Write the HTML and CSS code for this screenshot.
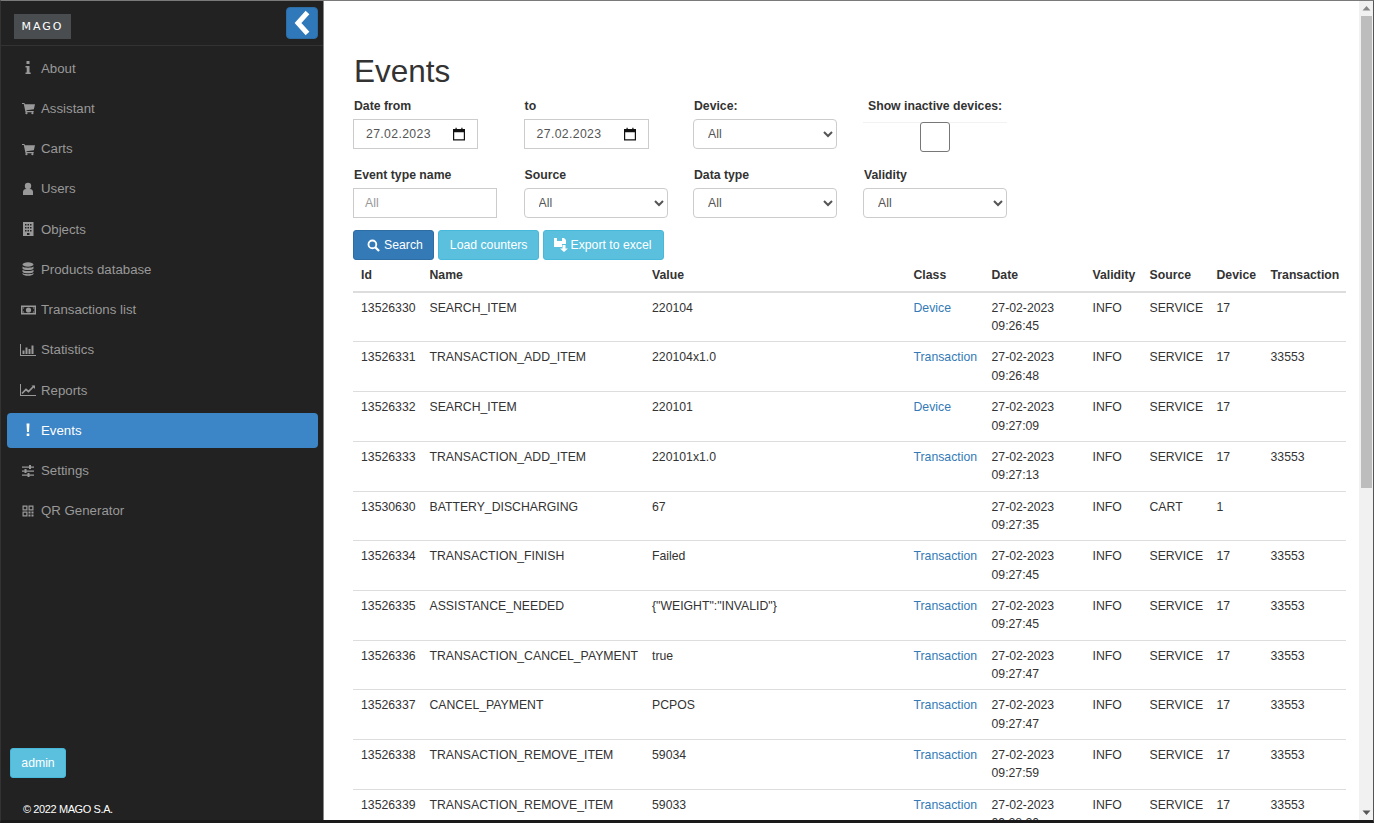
FILE: index.html
```html
<!DOCTYPE html>
<html lang="en">
<head>
    <meta charset="UTF-8">
    <meta name="viewport" content="width=device-width, initial-scale=1.0">
    <title>Events</title>
    <link rel="stylesheet" href="styles.css">
</head>
<body>
    <div class="app">
        <aside class="sidebar">
            <div class="brand">
                <div class="logo">MAGO</div>
                <button class="toggle-btn">
                    <svg width="18" height="26" viewBox="0 0 18 26"><path d="M14.500 2.500 L5 13 L14.500 23.500" fill="none" stroke="#fff" stroke-width="5"/></svg>
                </button>
            </div>
            <nav class="menu">
                <a class="menu-item"><span class="menu-icon"><svg width="14" height="14" viewBox="0 0 14 14"><path d="M5.500 0h3v3h-3zM4.500 5h4v6.500h1.200V13H4.500v-1.500h1.200V6.500H4.500z" fill="currentColor"/></svg></span>About</a>
                <a class="menu-item"><span class="menu-icon"><svg width="13" height="14" viewBox="0 0 14 14"><path d="M0 1.500h2.600l.5 1.500H14l-1.200 5.400-8 .9.2 1h7.600v1.200H3.800L1.900 2.700H0z" fill="currentColor"/><circle cx="4.800" cy="12.600" r="1.200" fill="currentColor"/><circle cx="11.200" cy="12.600" r="1.200" fill="currentColor"/></svg></span>Assistant</a>
                <a class="menu-item"><span class="menu-icon"><svg width="13" height="14" viewBox="0 0 14 14"><path d="M0 1.500h2.600l.5 1.500H14l-1.200 5.400-8 .9.2 1h7.600v1.200H3.800L1.900 2.700H0z" fill="currentColor"/><circle cx="4.800" cy="12.600" r="1.200" fill="currentColor"/><circle cx="11.200" cy="12.600" r="1.200" fill="currentColor"/></svg></span>Carts</a>
                <a class="menu-item"><span class="menu-icon"><svg width="14" height="14" viewBox="0 0 14 14"><circle cx="7" cy="4" r="3.200" fill="currentColor"/><path d="M2 13v-3c0-2 1.500-3 3-3h4c1.500 0 3 1 3 3v3z" fill="currentColor"/></svg></span>Users</a>
                <a class="menu-item"><span class="menu-icon"><svg width="14" height="14" viewBox="0 0 14 14"><path fill-rule="evenodd" d="M2 0h10.500v14H2zM4 2v1.500h1.500V2zM6.500 2v1.500H8V2zM9 2v1.500h1.500V2zM4 5v1.500h1.500V5zM6.500 5v1.500H8V5zM9 5v1.500h1.500V5zM4 8v1.500h1.500V8zM6.500 8v1.500H8V8zM9 8v1.500h1.500V8zM6 11v2h2.500v-2z" fill="currentColor"/></svg></span>Objects</a>
                <a class="menu-item"><span class="menu-icon"><svg width="14" height="14" viewBox="0 0 14 14"><ellipse cx="7" cy="2.500" rx="5.500" ry="2.200" fill="currentColor"/><path d="M1.500 4.500c1 1.600 10 1.600 11 0v2c-1 2-10 2-11 0zM1.500 7.800c1 1.600 10 1.600 11 0v2c-1 2-10 2-11 0zM1.500 11c1 1.600 10 1.600 11 0v1c-1 2.400-10 2.400-11 0z" fill="currentColor"/></svg></span>Products database</a>
                <a class="menu-item"><span class="menu-icon"><svg width="15" height="14" viewBox="0 0 15 14"><path fill-rule="evenodd" d="M0 2.500h15v9H0zM1.500 4v6h12V4z" fill="currentColor"/><circle cx="7.500" cy="7" r="2.600" fill="currentColor"/><path d="M2 4.500h1.500L2 6zM13 4.500h-1.500L13 6zM2 9.500h1.500L2 8zM13 9.500h-1.500L13 8z" fill="currentColor"/></svg></span>Transactions list</a>
                <a class="menu-item"><span class="menu-icon"><svg width="16" height="14" viewBox="0 0 16 14"><path d="M0 1h1v11h15v1H0zM2.500 7.500h2V11h-2zM5.500 4.500h2V11h-2zM8.500 6h2v5h-2zM11.500 2.500h2V11h-2z" fill="currentColor"/></svg></span>Statistics</a>
                <a class="menu-item"><span class="menu-icon"><svg width="16" height="14" viewBox="0 0 16 14"><path d="M0 1h1v11h15v1H0z" fill="currentColor"/><path d="M2 10.500 L6 6.500 L8.500 8.500 L14 3" fill="none" stroke="currentColor" stroke-width="1.700"/><path d="M11.500 2.500H15V6z" fill="currentColor"/></svg></span>Reports</a>
                <a class="menu-item active"><span class="menu-icon"><svg width="14" height="14" viewBox="0 0 14 14"><path d="M5.500 0.500h3L8 9H6zM5.700 10.500h2.600V13H5.700z" fill="currentColor"/></svg></span>Events</a>
                <a class="menu-item"><span class="menu-icon"><svg width="14" height="14" viewBox="0 0 14 14"><path d="M1 2.500h12v1.200H1zM1 6.500h12v1.200H1zM1 10.500h12v1.200H1z" fill="currentColor"/><path d="M8 1h2v4H8zM3.500 5h2v4h-2zM6.500 9h2v4h-2z" fill="currentColor"/></svg></span>Settings</a>
                <a class="menu-item"><span class="menu-icon"><svg width="14" height="14" viewBox="0 0 14 14"><path fill-rule="evenodd" d="M1.500 1.500h5v5h-5zM2.700 2.700v2.600h2.600V2.700zM7.500 1.500h5v5h-5zM8.700 2.700v2.600h2.600V2.700zM1.500 7.500h5v5h-5zM2.700 8.700v2.600h2.600V8.700zM7.500 7.500h2v2h-2zM10.500 7.500h2v2h-2zM7.500 10.500h2v2h-2zM10.500 10.500h2v2h-2z" fill="currentColor"/></svg></span>QR Generator</a>
            </nav>
            <div class="sidebar-bottom">
                <button class="btn btn-info btn-admin">admin</button>
                <div class="copyright">© 2022 MAGO S.A.</div>
            </div>
        </aside>

        <main class="content">
            <h1>Events</h1>
            <div class="filters">
                <div class="filter">
                    <label>Date from</label>
                    <div class="field date-field"><span>27.02.2023</span><svg width="14" height="14" viewBox="0 0 14 14"><path fill-rule="evenodd" d="M1 2h2.500V.8h1.200V2h4.600V.8h1.200V2H13v11.500H1zM2.200 5.200v7h9.600v-7z" fill="#111"/></svg></div>
                </div>
                <div class="filter">
                    <label>to</label>
                    <div class="field date-field"><span>27.02.2023</span><svg width="14" height="14" viewBox="0 0 14 14"><path fill-rule="evenodd" d="M1 2h2.500V.8h1.200V2h4.600V.8h1.200V2H13v11.500H1zM2.200 5.200v7h9.600v-7z" fill="#111"/></svg></div>
                </div>
                <div class="filter">
                    <label>Device:</label>
                    <select class="field select-field"><option>All</option></select>
                </div>
                <div class="filter">
                    <label class="label-center">Show inactive devices:</label>
                    <div class="check-wrap"><span class="check-box"></span></div>
                </div>
                <div class="filter">
                    <label>Event type name</label>
                    <input class="field text-field" type="text" placeholder="All">
                </div>
                <div class="filter">
                    <label>Source</label>
                    <select class="field select-field"><option>All</option></select>
                </div>
                <div class="filter">
                    <label>Data type</label>
                    <select class="field select-field"><option>All</option></select>
                </div>
                <div class="filter">
                    <label>Validity</label>
                    <select class="field select-field"><option>All</option></select>
                </div>
            </div>
            <div class="actions">
                <button class="btn btn-primary"><svg width="13" height="13" viewBox="0 0 14 14"><circle cx="5.800" cy="5.800" r="4.200" fill="none" stroke="#fff" stroke-width="2"/><path d="M9 9l4 4" stroke="#fff" stroke-width="2.400"/></svg>Search</button>
                <button class="btn btn-info">Load counters</button>
                <button class="btn btn-info btn-export"><svg width="14" height="14" viewBox="0 0 14 14"><path fill-rule="evenodd" d="M0 0h10l2 2v4H8v3H0zM3 0v3h5V0zM8.500 7h3v3.500H14L10 14l-4-3.500h2.500z" fill="#fff"/></svg>Export to excel</button>
            </div>
            <table class="events-table">
                <colgroup>
                    <col class="col-id"><col class="col-name"><col class="col-value"><col class="col-class"><col class="col-date"><col class="col-validity"><col class="col-source"><col class="col-device"><col class="col-transaction">
                </colgroup>
                <thead>
                    <tr><th>Id</th><th>Name</th><th>Value</th><th>Class</th><th>Date</th><th>Validity</th><th>Source</th><th>Device</th><th>Transaction</th></tr>
                </thead>
                <tbody>
                    <tr><td>13526330</td><td>SEARCH_ITEM</td><td>220104</td><td><a>Device</a></td><td>27-02-2023<br>09:26:45</td><td>INFO</td><td>SERVICE</td><td>17</td><td></td></tr>
                    <tr><td>13526331</td><td>TRANSACTION_ADD_ITEM</td><td>220104x1.0</td><td><a>Transaction</a></td><td>27-02-2023<br>09:26:48</td><td>INFO</td><td>SERVICE</td><td>17</td><td>33553</td></tr>
                    <tr><td>13526332</td><td>SEARCH_ITEM</td><td>220101</td><td><a>Device</a></td><td>27-02-2023<br>09:27:09</td><td>INFO</td><td>SERVICE</td><td>17</td><td></td></tr>
                    <tr><td>13526333</td><td>TRANSACTION_ADD_ITEM</td><td>220101x1.0</td><td><a>Transaction</a></td><td>27-02-2023<br>09:27:13</td><td>INFO</td><td>SERVICE</td><td>17</td><td>33553</td></tr>
                    <tr><td>13530630</td><td>BATTERY_DISCHARGING</td><td>67</td><td></td><td>27-02-2023<br>09:27:35</td><td>INFO</td><td>CART</td><td>1</td><td></td></tr>
                    <tr><td>13526334</td><td>TRANSACTION_FINISH</td><td>Failed</td><td><a>Transaction</a></td><td>27-02-2023<br>09:27:45</td><td>INFO</td><td>SERVICE</td><td>17</td><td>33553</td></tr>
                    <tr><td>13526335</td><td>ASSISTANCE_NEEDED</td><td>{"WEIGHT":"INVALID"}</td><td><a>Transaction</a></td><td>27-02-2023<br>09:27:45</td><td>INFO</td><td>SERVICE</td><td>17</td><td>33553</td></tr>
                    <tr><td>13526336</td><td>TRANSACTION_CANCEL_PAYMENT</td><td>true</td><td><a>Transaction</a></td><td>27-02-2023<br>09:27:47</td><td>INFO</td><td>SERVICE</td><td>17</td><td>33553</td></tr>
                    <tr><td>13526337</td><td>CANCEL_PAYMENT</td><td>PCPOS</td><td><a>Transaction</a></td><td>27-02-2023<br>09:27:47</td><td>INFO</td><td>SERVICE</td><td>17</td><td>33553</td></tr>
                    <tr><td>13526338</td><td>TRANSACTION_REMOVE_ITEM</td><td>59034</td><td><a>Transaction</a></td><td>27-02-2023<br>09:27:59</td><td>INFO</td><td>SERVICE</td><td>17</td><td>33553</td></tr>
                    <tr><td>13526339</td><td>TRANSACTION_REMOVE_ITEM</td><td>59033</td><td><a>Transaction</a></td><td>27-02-2023<br>09:28:20</td><td>INFO</td><td>SERVICE</td><td>17</td><td>33553</td></tr>
                </tbody>
            </table>
        </main>

        <div class="scrollbar">
            <div class="scroll-arrow"><svg width="9" height="6" viewBox="0 0 9 6"><path d="M4.500 1L8.500 5.500H.5z" fill="#888"/></svg></div>
            <div class="scroll-track"><div class="scroll-thumb"></div></div>
            <div class="scroll-arrow"><svg width="9" height="6" viewBox="0 0 9 6"><path d="M4.500 5L.5 .5h8z" fill="#555"/></svg></div>
        </div>
    </div>
</body>
</html>
```

FILE: styles.css
```css
* {
    box-sizing: border-box;
}

html, body {
    height: 100%;
}

body {
    margin: 0;
    font-family: "Liberation Sans", Arial, sans-serif;
    font-size: 12.250px;
    color: #333;
    background-color: #fff;
    overflow: hidden;
}

.app {
    display: flex;
    height: 100vh;
    border-top: 1px solid #7a7a7a;
    border-left: 1px solid #333;
    border-right: 1px solid #555;
    border-bottom: 3px solid #1a1a1a;
    overflow: hidden;
}

/* sidebar */

.sidebar {
    width: 323px;
    flex-shrink: 0;
    display: flex;
    flex-direction: column;
    background-color: #222;
    border-right: 1px solid #888;
}

.brand {
    display: flex;
    justify-content: space-between;
    align-items: flex-start;
    height: 45px;
    padding: 6px 5px 0 13px;
    border-bottom: 1px solid #333;
}

.logo {
    width: 57px;
    height: 25px;
    margin-top: 7px;
    background-color: #4a4d50;
    color: #fff;
    font-family: "DejaVu Sans", sans-serif;
    font-size: 11px;
    line-height: 25px;
    letter-spacing: 2px;
    text-align: center;
}

.toggle-btn {
    width: 32px;
    height: 32px;
    padding: 0;
    display: flex;
    align-items: center;
    justify-content: center;
    background-color: #2f78b9;
    border: 1px solid #2e6da4;
    border-radius: 4px;
}

.menu {
    display: flex;
    flex-direction: column;
    gap: 5.250px;
    padding: 5px 5px 0 6px;
}

.menu-item {
    display: flex;
    align-items: center;
    height: 35px;
    padding: 0 0 1px 12px;
    color: #999;
    font-size: 13.250px;
    border-radius: 4px;
}

.menu-item.active {
    background-color: #3c85c6;
    color: #fff;
}

.menu-icon {
    width: 18px;
    margin-right: 4px;
    display: flex;
    justify-content: center;
    flex-shrink: 0;
}

.sidebar-bottom {
    margin-top: auto;
    padding: 0 0 3px 9px;
}

.btn-admin {
    width: 56px;
    padding: 0;
    font-size: 13.500px;
}

.copyright {
    margin: 23px 0 0 13px;
    color: #fff;
    font-size: 11px;
    letter-spacing: -0.400px;
    line-height: 16px;
}

/* main content */

.content {
    flex: 1;
    min-width: 0;
    padding: 0 13px 0 30px;
    overflow: hidden;
}

h1 {
    margin: 52px 0 8px;
    font-size: 31.500px;
    font-weight: 400;
    line-height: 36px;
    color: #333;
}

.filters {
    display: grid;
    grid-template-columns: 170.600px 169.400px 170px 170px;
    row-gap: 17px;
    margin-left: -1px;
}

.filter label {
    display: block;
    margin: 0 0 4px 1px;
    height: 18px;
    font-size: 12.250px;
    font-weight: 700;
    line-height: 18px;
}

.filter .label-center {
    width: 144px;
    margin: 0 0 7px 5px;
}

.field {
    height: 30px;
    font-family: inherit;
    font-size: 12.250px;
    color: #555;
    background-color: #fff;
    border: 1px solid #ccc;
}

.date-field {
    display: flex;
    align-items: center;
    justify-content: space-between;
    width: 125px;
    padding: 0 11px 0 12px;
    letter-spacing: 0.350px;
}

.select-field {
    width: 144px;
    padding-left: 10px;
    border-radius: 4px;
}

.text-field {
    width: 144px;
    padding: 0 11px;
}

.text-field::placeholder {
    color: #999;
    opacity: 1;
}

.check-wrap {
    display: flex;
    justify-content: center;
    width: 144px;
    height: 27px;
    border-top: 1px solid #f2f2f2;
}

.check-box {
    flex-shrink: 0;
    width: 30px;
    height: 30px;
    margin-top: -1px;
    background-color: #fff;
    border: 1px solid #777;
    border-radius: 3px;
}

.actions {
    display: flex;
    gap: 4px;
    margin: 12px 0 0 -1px;
}

.btn {
    display: inline-flex;
    align-items: center;
    justify-content: center;
    height: 30px;
    padding: 0 11px;
    gap: 4px;
    font-family: inherit;
    font-size: 12.250px;
    color: #fff;
    border: 1px solid transparent;
    border-radius: 3px;
}

.btn-primary {
    background-color: #337ab7;
    border-color: #2e6da4;
    padding: 0 10px 0 13px;
}

.btn-info {
    background-color: #5bc0de;
    border-color: #46b8da;
}

.btn-export {
    gap: 2px;
    padding: 0 11px 0 10px;
}

/* table */

.events-table {
    width: 993px;
    margin-left: -1px;
    border-collapse: collapse;
    table-layout: fixed;
    line-height: 18.350px;
}

.col-id { width: 68.500px; }
.col-name { width: 222.500px; }
.col-value { width: 261.500px; }
.col-class { width: 78px; }
.col-date { width: 101px; }
.col-validity { width: 57px; }
.col-source { width: 67px; }
.col-device { width: 54px; }
.col-transaction { width: 83.500px; }

.events-table th {
    height: 31.800px;
    padding: 6px 8px;
    text-align: left;
    font-weight: 700;
    border-bottom: 2px solid #ddd;
    white-space: nowrap;
}

.events-table td {
    padding: 6px 8px;
    vertical-align: top;
    border-bottom: 1px solid #ddd;
    white-space: nowrap;
}

.events-table a {
    color: #337ab7;
}

/* scrollbar */

.scrollbar {
    width: 14px;
    flex-shrink: 0;
    display: flex;
    flex-direction: column;
    background-color: #f1f1f1;
}

.scroll-arrow {
    height: 14px;
    flex-shrink: 0;
    display: flex;
    align-items: center;
    justify-content: center;
}

.scroll-track {
    flex: 1;
    padding: 1px 1px 1px 2px;
}

.scroll-thumb {
    height: 472px;
    background-color: #bdbdbd;
}
```
